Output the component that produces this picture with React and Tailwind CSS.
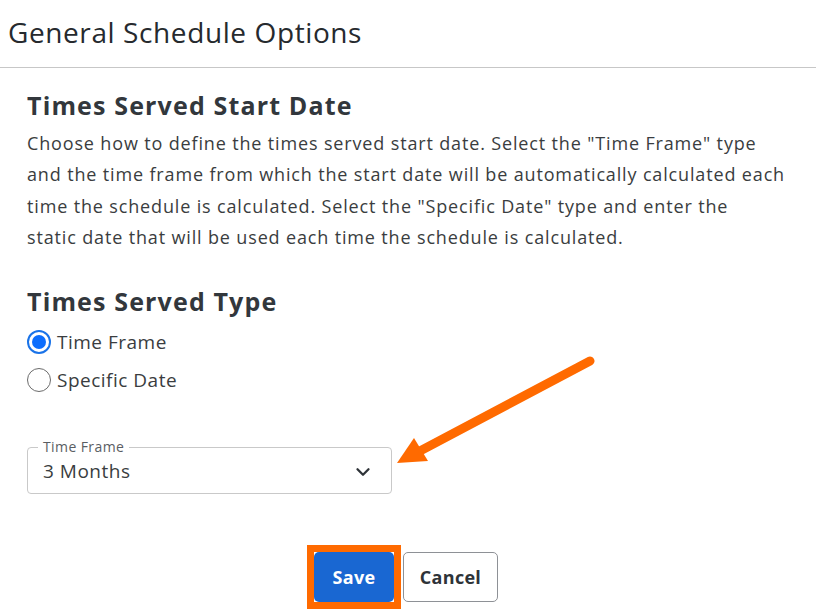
import { ChevronDown } from 'lucide-react';

const font = { fontFamily: '"Open Sans", "Liberation Sans", sans-serif' };

export default function App() {
  return (
    <div className="relative w-[816px] h-[614px] bg-white overflow-hidden text-[#3a3d40]" style={font}>
      {/* Header */}
      <div className="h-[68px] border-b border-[#c7c7c7] pl-[8px] pt-[13px]">
        <h1 className="text-[28px] leading-[38px] text-[#262a2e] tracking-[0.6px]">General Schedule Options</h1>
      </div>

      <div className="pl-[27px] pr-[20px] pt-[21px]">
        <h2 className="text-[25px] leading-[32px] font-bold text-[#32373c] tracking-[1.15px]">Times Served Start Date</h2>
        <p className="mt-[7px] text-[18px] leading-[31.3px] w-[780px] tracking-[0.85px]">
          Choose how to define the times served start date. Select the "Time Frame" type
          <br />
          and the time frame from which the start date will be automatically calculated each
          <br />
          time the schedule is calculated. Select the "Specific Date" type and enter the
          <br />
          static date that will be used each time the schedule is calculated.
        </p>

        <h2 className="mt-[32px] text-[25px] leading-[32px] font-bold text-[#32373c] tracking-[1.15px]">Times Served Type</h2>
        <div className="mt-[13px] flex flex-col gap-[14px]">
          <label className="flex items-center gap-[6px] h-[24px]">
            <span className="w-[24px] h-[24px] rounded-full border-2 border-[#1a73e8] flex items-center justify-center">
              <span className="w-[14px] h-[14px] rounded-full bg-[#0d6efd]" />
            </span>
            <span className="text-[19px] tracking-[0.5px] text-[#3a3d40]">Time Frame</span>
          </label>
          <label className="flex items-center gap-[6px] h-[24px]">
            <span className="w-[24px] h-[24px] rounded-full border-[1.5px] border-[#6b6b6b]" />
            <span className="text-[19px] tracking-[0.5px] text-[#3a3d40]">Specific Date</span>
          </label>
        </div>

        {/* Select */}
        <div className="relative mt-[55px] w-[365px] h-[47px] border border-[#c9c9c9] rounded-[4px]">
          <span className="absolute -top-[11px] left-[10px] bg-white px-[5px] text-[14px] leading-[19px] tracking-[0.4px] text-[#5a5e63]">
            Time Frame
          </span>
          <div className="flex items-center justify-between h-full pl-[15px] pr-[17px] pt-[2px]">
            <span className="text-[19px] tracking-[0.5px] text-[#3a3d40]">3 Months</span>
            <ChevronDown size={22} strokeWidth={2.5} className="text-[#2e3338]" />
          </div>
        </div>

        {/* Buttons */}
        <div className="mt-[51px] flex items-center gap-[2px] pl-[280px]">
          <div className="border-[7px] border-[#ff6a00]">
            <button className="block w-[80px] h-[50px] rounded-[5px] bg-[#1967d2] text-white font-bold text-[18px] tracking-[0.3px]">
              Save
            </button>
          </div>
          <button className="w-[95px] h-[50px] rounded-[5px] border border-[#8e9196] bg-white text-[#2e3338] font-bold text-[18px] tracking-[0.3px]">
            Cancel
          </button>
        </div>
      </div>

      {/* Annotation arrow */}
      <svg className="absolute left-0 top-0 pointer-events-none" width="816" height="614">
        <line x1="590" y1="361" x2="420" y2="451" stroke="#ff6a00" strokeWidth="9" strokeLinecap="round" />
        <polygon points="397,463 414,438 428,461" fill="#ff6a00" />
      </svg>
    </div>
  );
}
